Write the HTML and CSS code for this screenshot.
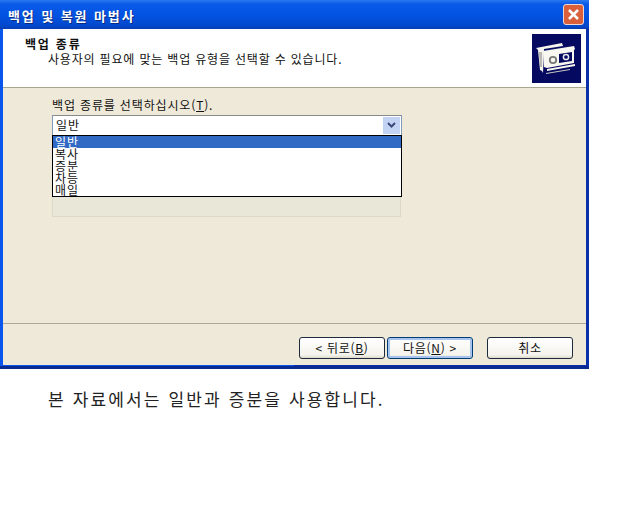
FILE: index.html
```html
<!DOCTYPE html>
<html lang="ko">
<head>
<meta charset="utf-8">
<title>백업 및 복원 마법사</title>
<link rel="stylesheet" href="styles.css">
</head>
<body>
<div class="window">
  <div class="titlebar">
    <span class="title">백업 및 복원 마법사</span>
    <span class="close"><svg width="19" height="19" viewBox="0 0 19 19"><path d="M5 5l9 9M14 5l-9 9" stroke="#fff" stroke-width="2.6" fill="none"/></svg></span>
  </div>
  <div class="client">
    <div class="header">
      <div class="head-text">
        <div class="head-title">백업 종류</div>
        <div class="head-sub">사용자의 필요에 맞는 백업 유형을 선택할 수 있습니다.</div>
      </div>
      <div class="logo">
        <svg width="49" height="49" viewBox="0 0 49 49">
          <rect width="49" height="49" fill="#050a60"/>
          <path d="M4 14L30 9l1 3-19 3-1 24-1-2-2-1-2-20z" fill="#f4f4ec"/>
          <path d="M7 18h3v15H8z" fill="#b8b8b0"/>
          <path d="M11 17l31-5 1 3-1 1 0 13-27 5-3-1z" fill="#f8f8f0"/>
          <path d="M27 20l13-2v9l-13 2z" fill="#050a60"/>
          <circle cx="34" cy="23" r="2.600" fill="none" stroke="#e8e8f0" stroke-width="1.500"/>
          <circle cx="21" cy="26" r="3.200" fill="none" stroke="#777" stroke-width="1.800"/>
          <path d="M15 35l28-5v2l-28 5z" fill="#f8f8f0"/>
          <path d="M14 39l24-4v1l-24 4z" fill="#c8c8c0"/>
        </svg>
      </div>
    </div>
    <div class="content">
      <label class="field-label">백업 종류를 선택하십시오(<u>T</u>).</label>
      <div class="combo">
        <div class="combo-box">
          <span class="combo-value">일반</span>
          <span class="combo-btn"><svg width="9" height="7" viewBox="0 0 9 7"><path d="M1 1l3.500 3.500L8 1" stroke="#3a4a78" stroke-width="2" fill="none"/></svg></span>
        </div>
        <ul class="list">
          <li class="selected">일반</li>
          <li>복사</li>
          <li>증분</li>
          <li>차등</li>
          <li>매일</li>
        </ul>
        <div class="ghost"></div>
      </div>
    </div>
    <div class="footer">
      <button class="btn back">&lt; 뒤로(<u>B</u>)</button>
      <button class="btn next">다음(<u>N</u>) &gt;</button>
      <button class="btn cancel">취소</button>
    </div>
  </div>
</div>
<p class="note">본 자료에서는 일반과 증분을 사용합니다.</p>
</body>
</html>
```
FILE: styles.css
```css
* { box-sizing: border-box; }
html, body { margin: 0; padding: 0; background: #fff; }
body { width: 640px; height: 512px; overflow: hidden; font-family: "Noto Sans CJK KR", "Liberation Sans", sans-serif; color: #111; }
.window { width: 589px; height: 369px; background: linear-gradient(90deg, #0a55ec 50%, #0a2fa8 50%); display: flex; flex-direction: column; padding: 0 3px 1px 3px; border-bottom: 3px solid #0a2a90; }
.titlebar { height: 29px; margin: 0 -3px; padding: 0 5px 0 8px; flex: none; display: flex; align-items: center; justify-content: space-between; background: linear-gradient(#2a7af0 0, #0a5ae8 4px, #0354e4 14px, #0248cc 26px, #0a3cb0 29px); }
.title { font-size: 13px; font-weight: 700; color: #fff; letter-spacing: 1.9px; text-shadow: 1px 1px 0 #0a2a80; margin-top: 1px; }
.close { width: 21px; height: 21px; border: 1px solid #f0d8d0; border-radius: 3px; background: #d9603a; display: flex; align-items: center; justify-content: center; }
.client { flex: 1; display: flex; flex-direction: column; background: #efe9d9; }
.header { height: 59px; flex: none; background: #fff; border-bottom: 1px solid #a8a590; display: flex; justify-content: space-between; padding: 5px 5px 0 22px; }
.head-title { font-size: 12px; font-weight: 700; line-height: 13px; margin-top: 3px; letter-spacing: 1.8px; }
.head-sub { font-size: 12px; line-height: 15px; margin-top: 1px; padding-left: 23px; letter-spacing: .82px; }
.logo { width: 49px; height: 49px; }
.logo svg { display: block; }
.content { flex: 1; padding: 8px 0 0 49px; }
.field-label { display: block; font-size: 12px; line-height: 17px; height: 19px; letter-spacing: .85px; }
.combo { position: relative; width: 350px; }
.combo-box { height: 21px; background: #fff; border: 1px solid #7f9db9; border-top-color: #8a8a8a; display: flex; justify-content: space-between; align-items: center; padding: 0 1px 0 3px; font-size: 12px; letter-spacing: 1px; }
.combo-value { margin-top: -3px; }
.combo-btn { width: 17px; height: 17px; background: #c3d3f4; display: flex; align-items: center; justify-content: center; }
.list { position: absolute; left: 0; top: 20px; width: 350px; height: 62px; margin: 0; padding: 0; list-style: none; background: #fff; border: 1px solid #000; z-index: 1; font-size: 12px; line-height: 12px; letter-spacing: 1px; }
.list li { height: 12px; padding-left: 2px; }
.list .selected { background: #316ac5; color: #fff; }
.ghost { position: absolute; left: 0; top: 82px; width: 349px; height: 20px; border: 1px solid #dcd9c8; border-top: 0; background: #e9e7d8; }
.footer { height: 42px; flex: none; border-top: 1px solid #aca899; display: flex; justify-content: flex-end; align-items: flex-start; padding: 13px 13px 0 0; }
.btn { height: 22px; width: 86px; padding: 0; border: 1px solid #1c2a3c; border-radius: 3px; background: linear-gradient(#fff, #f4f3ec 85%, #dcd8c8); font-family: inherit; font-size: 12px; line-height: 18px; color: #111; letter-spacing: .7px; }
.next { box-shadow: inset 0 0 0 2px #a6c4ee; margin-left: 2px; border-color: #003c74; }
.cancel { margin-left: 14px; }
.note { margin: 0; padding: 18px 0 0 48px; font-size: 17px; line-height: 24px; color: #222; letter-spacing: 2.14px; }
```
